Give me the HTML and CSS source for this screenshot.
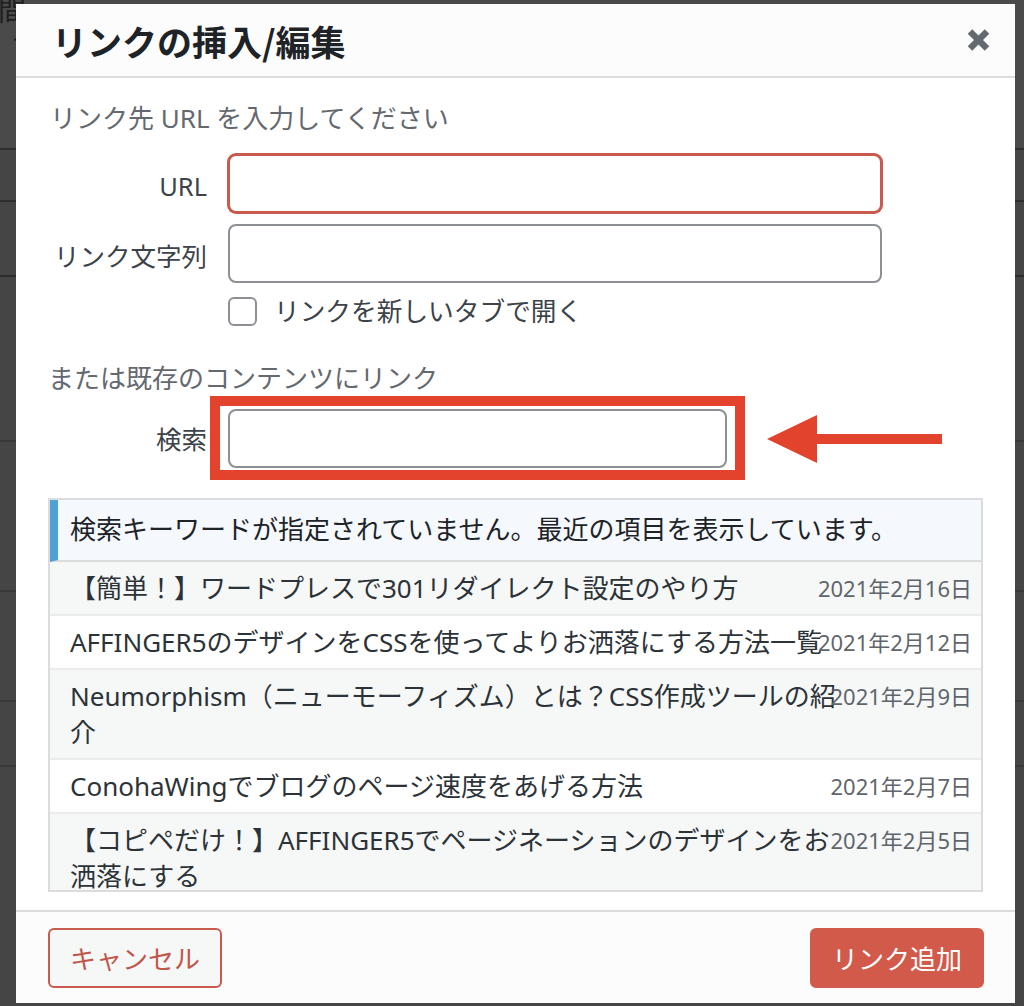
FILE: index.html
```html
<!DOCTYPE html>
<html lang="ja">
<head>
<meta charset="utf-8">
<title>リンクの挿入/編集</title>
<link rel="stylesheet" href="styles.css">
</head>
<body>
<div class="page">
  <div class="page-line first">間</div>
  <div class="page-line second">、て</div>
</div>

<div class="modal" role="dialog">
  <header class="modal-head">
    <h1 class="modal-title">リンクの挿入/編集</h1>
    <button class="close" type="button" aria-label="閉じる">
      <svg width="23" height="24" viewBox="0 0 23 24"><path d="M3 3.5 L20 20.5 M20 3.5 L3 20.5" stroke="#646970" stroke-width="6.4" fill="none"/></svg>
    </button>
  </header>

  <div class="modal-body">
    <p class="howto">リンク先 URL を入力してください</p>
    <div class="field url-row">
      <label class="field-label low">URL</label>
      <input class="text-input focused" type="text">
    </div>
    <div class="field text-row">
      <label class="field-label low">リンク文字列</label>
      <input class="text-input" type="text">
    </div>
    <div class="check-row">
      <span class="checkbox"></span>
      <span class="check-label">リンクを新しいタブで開く</span>
    </div>

    <p class="howto section">または既存のコンテンツにリンク</p>
    <div class="field search-row">
      <label class="field-label">検索</label>
      <div class="search-wrap">
        <input class="text-input search-input" type="text">
        <span class="mark"></span>
      </div>
      <svg class="arrow" width="175" height="50" viewBox="0 0 175 50"><polygon points="0,25 50,1 50,49" fill="#e2432c"/><rect x="49" y="20" width="126" height="10" fill="#e2432c"/></svg>
    </div>

    <ul class="results">
      <li class="notice">検索キーワードが指定されていません。最近の項目を表示しています。</li>
      <li class="item alt"><span class="title">【簡単！】ワードプレスで301リダイレクト設定のやり方</span><span class="date">2021年2月16日</span></li>
      <li class="item"><span class="title">AFFINGER5のデザインをCSSを使ってよりお洒落にする方法一覧</span><span class="date">2021年2月12日</span></li>
      <li class="item alt"><span class="title">Neumorphism（ニューモーフィズム）とは？CSS作成ツールの紹<br>介</span><span class="date">2021年2月9日</span></li>
      <li class="item"><span class="title">ConohaWingでブログのページ速度をあげる方法</span><span class="date">2021年2月7日</span></li>
      <li class="item alt"><span class="title">【コピペだけ！】AFFINGER5でページネーションのデザインをお<br>洒落にする</span><span class="date">2021年2月5日</span></li>
    </ul>
  </div>

  <footer class="modal-foot">
    <button class="btn cancel" type="button">キャンセル</button>
    <button class="btn primary" type="button">リンク追加</button>
  </footer>
</div>
</body>
</html>
```

FILE: styles.css
```css
* { box-sizing: border-box; }

html, body { margin: 0; padding: 0; }

body {
  width: 1024px;
  height: 1006px;
  overflow: hidden;
  position: relative;
  font-family: "Noto Sans", "Noto Sans CJK JP", sans-serif;
  background-color: #454545;
  background-image:
    linear-gradient(#2e2e2e, #2e2e2e),
    linear-gradient(#2e2e2e, #2e2e2e),
    linear-gradient(#2e2e2e, #2e2e2e),
    linear-gradient(#383838, #383838),
    linear-gradient(#383838, #383838),
    linear-gradient(#383838, #383838),
    linear-gradient(#383838, #383838),
    linear-gradient(#4a4a4a, #4a4a4a);
  background-size: 100% 2px, 100% 2px, 100% 2px, 100% 2px, 100% 2px, 100% 2px, 100% 2px, 100% 148px;
  background-position: 0 148px, 0 200px, 0 275px, 0 440px, 0 590px, 0 700px, 0 765px, 0 0;
  background-repeat: no-repeat;
}

.page { color: #1e1e1e; width: 16px; }
.page-line { white-space: nowrap; font-family: "Noto Sans CJK JP", sans-serif; }
.page-line.first { font-size: 28px; line-height: 30px; margin: -6px 0 0 -2px; }
.page-line.second { font-size: 26px; line-height: 30px; margin: 6px 0 0 -14px; }

.modal {
  position: absolute;
  left: 16px;
  top: 4px;
  width: 999px;
  height: 999px;
  background: #fff;
  display: flex;
  flex-direction: column;
  color: #2c3338;
}

.modal-head {
  height: 74px;
  flex: none;
  background: #fcfcfc;
  border-bottom: 2px solid #dcdcde;
  display: flex;
  align-items: center;
  justify-content: space-between;
  padding: 0 25px 0 36px;
}

.modal-title {
  margin: 0;
  font-size: 35px;
  font-weight: 700;
  line-height: 1;
  color: #1d2327;
  font-family: "Noto Sans CJK JP", sans-serif;
}

.close {
  border: 0;
  background: none;
  padding: 0;
  width: 23px;
  height: 24px;
  display: block;
}
.close svg { display: block; }

.modal-body {
  flex: 1;
  padding: 0 32px;
  font-size: 26px;
}

.howto {
  margin: 21px 0 0 2px;
  font-size: 26px;
  line-height: 38px;
  color: #646970;
}
.howto.section { margin-top: 29px; margin-left: 0; }

.field {
  display: flex;
  align-items: center;
}
.url-row { margin-top: 17px; }
.text-row { margin-top: 11px; }
.search-row { margin-top: 12px; }

.field-label {
  width: 180px;
  flex: none;
  text-align: right;
  padding-right: 21px;
  font-size: 25.5px;
  line-height: 38px;
  color: #3c434a;
}
.field-label.low { padding-top: 5px; }

.text-input {
  display: block;
  width: 654px;
  height: 59px;
  border: 2px solid #8c8f94;
  border-radius: 8px;
  background: #fff;
  margin: 0;
  padding: 0 12px;
  font: inherit;
  outline: none;
}
.text-input.focused {
  border-color: #c85a4e;
  box-shadow: 0 0 0 1px #c85a4e;
}

.check-row {
  margin-top: 9px;
  height: 38px;
  display: flex;
  align-items: center;
  padding-left: 180px;
}
.checkbox {
  width: 29px;
  height: 29px;
  border: 2px solid #8c8f94;
  border-radius: 6px;
  background: #fff;
  flex: none;
}
.check-label {
  margin-left: 17px;
  padding-top: 2px;
  font-size: 25.7px;
  line-height: 38px;
  color: #3c434a;
}

.search-wrap {
  position: relative;
  width: 499px;
  flex: none;
}
.search-input { width: 499px; }
.mark {
  position: absolute;
  left: -18px;
  right: -18px;
  top: -13px;
  bottom: -12px;
  border: 10px solid #e3422c;
}

.arrow {
  display: block;
  margin-left: 40px;
  flex: none;
}

.results {
  list-style: none;
  margin: 30px 0 0;
  padding: 0;
  height: 394px;
  border: 2px solid #dcdcde;
  overflow: hidden;
  background: #fff;
}

.notice {
  background: #f5f9fd;
  border-left: 8px solid #4fa2d4;
  border-bottom: 2px solid #dcdcde;
  padding: 11px 12px 13px 12px;
  height: 62px;
  line-height: 36px;
  color: #1d2327;
  white-space: nowrap;
}

.item {
  position: relative;
  padding: 8px 12px 8px 20px;
  line-height: 36px;
  border-bottom: 2px solid #ececec;
  background: #fff;
  color: #2c3338;
}
.item.alt { background: #f6f7f7; }

.title {
  display: block;
  width: calc(100% - 136px);
  white-space: nowrap;
  line-height: 36px;
}

.date {
  position: absolute;
  top: 8px;
  right: 9px;
  font-size: 22px;
  line-height: 36px;
  color: #5f656b;
}

.modal-foot {
  height: 93px;
  flex: none;
  background: #fcfcfc;
  border-top: 2px solid #dcdcde;
  display: flex;
  justify-content: space-between;
  align-items: flex-start;
  padding: 16px 31px 0 32px;
}

.btn {
  width: 174px;
  height: 60px;
  border-radius: 6px;
  font-family: "Noto Sans CJK JP", sans-serif;
  font-size: 26px;
  line-height: 1;
  padding: 0;
  display: flex;
  align-items: center;
  justify-content: center;
}
.cancel {
  background: #f6f7f7;
  border: 2px solid #c85a4e;
  color: #c0564a;
}
.primary {
  background: #d25a4b;
  border: 2px solid #d25a4b;
  color: #fff;
}
```
